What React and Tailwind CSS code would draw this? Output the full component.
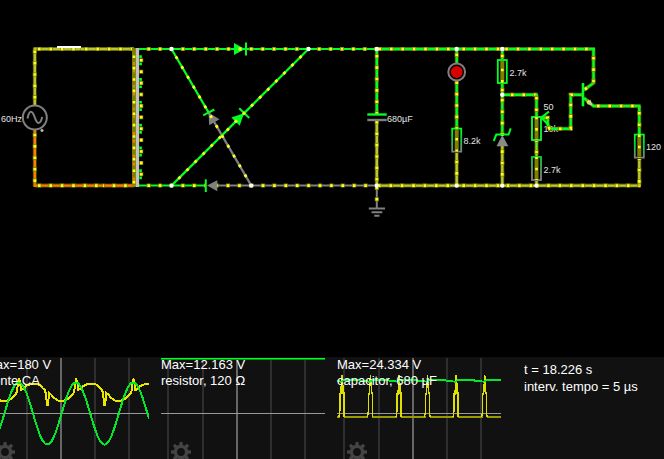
import React from "react";

const GREEN = "#00ff22";
const OLIVE = "#b9c832";
const GRAY = "#808080";
const ORANGE = "#ff7a00";
const STEP = 11.4;

// A wire with evenly spaced current dots; `first` is the distance to the first dot.
function Wire({ d, color, first = 0, wide = false, dots = true }) {
  return (
    <g fill="none">
      {wide && <path d={d} stroke="#808000" strokeWidth="4" opacity="0.6" />}
      <path d={d} stroke={color} strokeWidth={wide ? 2.4 : 2} />
      {dots && (
        <>
          <path d={d} stroke="#808000" strokeWidth="4" strokeDasharray="4 7.4" strokeDashoffset={(2 - first + STEP) % STEP} />
          <path d={d} stroke="#ffff20" strokeWidth="2.6" strokeDasharray="2.6 8.8" strokeDashoffset={(1.3 - first + STEP) % STEP} />
        </>
      )}
    </g>
  );
}

function Resistor({ x, y, fill, first, h = 23 }) {
  return (
    <g>
      <rect x={x - 4.5} y={y} width="9" height={h} fill="none" stroke={fill} strokeWidth="1.8" />
      <path d={`M${x} ${y + 1}V${y + h - 1}`} stroke="#808000" strokeWidth="4" />
      <path
        d={`M${x} ${y}V${y + h}`}
        stroke="#ffff20"
        strokeWidth="2.6"
        strokeDasharray="2.6 8.8"
        strokeDashoffset={(1.3 - first + STEP) % STEP}
      />
    </g>
  );
}

const wires = [
  { d: "M34.8 49H80.5", color: OLIVE, first: 4.5, wide: true },
  { d: "M80.5 49H134", color: OLIVE, first: 5.8, wide: true },
  { d: "M34.8 47.5V106", color: OLIVE, first: 4.2, wide: true },
  { d: "M34.8 129V187", color: ORANGE, first: 6, wide: true },
  { d: "M34.8 185.6H103", color: ORANGE, first: 4.5, wide: true },
  { d: "M103 185.6H134", color: ORANGE, first: 11, wide: true },
  { d: "M139 49H308.5", color: GREEN, first: 9.7 },
  { d: "M308.5 49H376.8", color: GREEN, first: 10.7 },
  { d: "M376.8 49H456.7", color: GREEN, first: 3.1, wide: true },
  { d: "M456.7 49H502.3", color: GREEN, first: 7, wide: true },
  { d: "M502.3 49H595", color: GREEN, first: 4.3, wide: true },
  { d: "M139 185.6H206", color: GREEN, first: 9.7 },
  { d: "M215 185.6H251.3", color: GRAY, first: 1.6 },
  { d: "M251.3 185.6H376.8", color: GRAY, first: 0.3 },
  { d: "M376.8 185.6H456.7", color: OLIVE, first: 2.5, wide: true },
  { d: "M456.7 185.6H502.3", color: OLIVE, first: 7, wide: true },
  { d: "M502.3 185.6H536.5", color: OLIVE, first: 5.7, wide: true },
  { d: "M536.5 185.6H640.5", color: OLIVE, first: 0.6, wide: true },
  { d: "M376.8 49V114", color: GREEN, first: 7.2, wide: true },
  { d: "M376.8 120V185.6", color: OLIVE, first: 2.3, wide: true },
  { d: "M376.8 185.6V208", color: GRAY, first: 2.3 },
  { d: "M456.7 49V63", color: GREEN, first: 5.9, wide: true },
  { d: "M456.7 81V128", color: GREEN, first: 1.7, wide: true },
  { d: "M456.7 153V185.6", color: OLIVE, first: 9, wide: true },
  { d: "M502.3 49V59", color: GREEN, first: 7, wide: true },
  { d: "M502.3 84V94.7", color: GREEN, first: 6, wide: true },
  { d: "M502.3 94.7V135", color: GREEN, first: 5.6, wide: true },
  { d: "M502.3 146V185.6", color: OLIVE, first: 5.6, wide: true },
  { d: "M502.3 94.7H538", color: GREEN, first: 10, wide: true },
  { d: "M536.5 94.7V117", color: GREEN, first: 3.6, wide: true },
  { d: "M536.5 141V157", color: "#70e822", first: 11, wide: true },
  { d: "M536.5 181V185.6", color: OLIVE, dots: false, wide: true },
  { d: "M541 117.7H547.7V124L549.5 128.7H570.7V94.7H583", color: GREEN, first: 6, wide: true },
  { d: "M593.5 49V83L584 90", color: GREEN, first: 9.2, wide: true },
  { d: "M584 98L593.5 106H640.5", color: GREEN, first: 17.2, wide: true },
  { d: "M639.3 106V134", color: GREEN, first: 7.3, wide: true },
  { d: "M639.3 159V185.6", color: OLIVE, first: 11, wide: true },
];

const nodes = [
  [171.5, 49], [308.5, 49], [376.8, 49], [456.7, 49], [502.3, 49], [502.3, 94.7],
  [171.5, 185.6], [251.3, 185.6], [376.8, 185.6], [456.7, 185.6], [502.3, 185.6], [536.5, 185.6],
];

const labels = [
  [1, 122, "60Hz"], [387, 122, "680µF"], [463.5, 144, "8.2k"], [509.5, 76, "2.7k"],
  [543.5, 110, "50"], [543.5, 132, "10k"], [543.5, 173, "2.7k"], [646, 150, "120"],
];

function Circuit() {
  return (
    <svg viewBox="0 0 664 357" className="block h-auto w-full" role="img" aria-label="Circuit">
      <defs>
        <linearGradient id="fade" x1="0" y1="0" x2="0" y2="1">
          <stop offset="0" stopColor={GREEN} />
          <stop offset="0.4" stopColor="#00dd33" />
          <stop offset="1" stopColor={GRAY} />
        </linearGradient>
        <linearGradient id="fadeLow" x1="0" y1="0" x2="0" y2="1">
          <stop offset="0" stopColor="#10d030" />
          <stop offset="0.9" stopColor={GRAY} />
        </linearGradient>
      </defs>

      <g className="fill-[#e4e4e4] font-['Liberation_Sans',Arial,sans-serif] text-[9px]">
        {labels.map(([x, y, t]) => (
          <text key={`${x}-${y}`} x={x} y={y}>{t}</text>
        ))}
      </g>

      {wires.map((w) => <Wire key={w.d} {...w} />)}

      {/* switch */}
      <path d="M57 47H81" stroke="#fff" strokeWidth="2" />

      {/* AC source */}
      <g fill="none" stroke={GRAY} strokeWidth="2">
        <circle cx="34.8" cy="117.5" r="12" />
        <path d="M27.5 118.5C28.5 113.5 29.5 111.8 31 111.8C34.5 111.8 35 123 38.5 123C40 123 41.2 121.3 42.2 117" />
      </g>
      <path d="M42 129V132M40.5 130.5H43.5" stroke="#c0c0c0" strokeWidth="1.4" />

      {/* transformer */}
      <path d="M134 48V187" stroke="#808000" strokeWidth="4" />
      <path d="M134 62V130" stroke="#c09018" strokeWidth="2" strokeDasharray="3 4.6 3 12.2" />
      <path d="M134 132V186" stroke={ORANGE} strokeWidth="2" strokeDasharray="3 4.6 3 12.2" />
      <path d="M134 49V186" stroke="#ffff20" strokeWidth="2.6" strokeDasharray="2.6 8.8" strokeDashoffset={1.3 - 7.7 + STEP} />
      <path d="M137.5 48V187" stroke="#c0c0c0" strokeWidth="3.2" />
      <path d="M140.6 55.3V180" stroke={GREEN} strokeWidth="2.6" strokeDasharray="2.7 4.6 2.7 12.8" />
      <path d="M141.2 58.3V177" stroke="#808000" strokeWidth="4" strokeDasharray="4 7.4" />
      <path d="M141.2 59V177" stroke="#ffff20" strokeWidth="2.6" strokeDasharray="2.6 8.8" />

      {/* bridge rectifier */}
      <path d="M171.5 49L208.7 112.6" stroke={GREEN} strokeWidth="2.2" />
      <path d="M208.7 112.6L251.3 185.6" stroke={GRAY} strokeWidth="2.2" />
      <path d="M208.5 112.5L209.2 125.3L219.5 119.2Z" fill={GRAY} />
      <path d="M203.2 115.3L214.4 109.5" stroke={GREEN} strokeWidth="2" />
      <path d="M171.5 185.6L308.5 49" stroke={GREEN} strokeWidth="2.2" />
      <path d="M244 113.2L231.3 117.5L239.7 125.8Z" fill={GREEN} />
      <path d="M239.2 108.3L249.3 118" stroke={GREEN} strokeWidth="2" />
      <g fill="none" stroke="#ffff20" strokeWidth="2.8" strokeDasharray="2.8 8.6">
        <path d="M171.5 49L251.3 185.6" strokeDashoffset={1.4 - 10 + STEP} />
        <path d="M171.5 185.6L308.5 49" strokeDashoffset={1.4 - 11.2 + STEP} />
      </g>
      <path d="M234 43V55L245 49Z" fill={GREEN} />
      <path d="M246 42.5V55.5" stroke={GREEN} strokeWidth="2" />
      <rect x="238.5" y="47.5" width="3" height="3" fill="#ffff20" />
      <path d="M217.3 180.3V191.3L207 185.6Z" fill={GRAY} />
      <path d="M205.8 179.3V192" stroke={GREEN} strokeWidth="2" />

      {/* capacitor and ground */}
      <path d="M367.3 114.5H386.7" stroke={GREEN} strokeWidth="2.4" />
      <path d="M367.3 120H386.7" stroke={GRAY} strokeWidth="2.4" />
      <path d="M368.8 208.5H385M371.5 212.3H382.3M374.3 215.8H379.5" stroke={GRAY} strokeWidth="2" />

      {/* LED */}
      <circle cx="456.7" cy="72" r="8.4" fill="none" stroke={GRAY} strokeWidth="2" />
      <circle cx="456.7" cy="72" r="6" fill="#d60000" />

      <Resistor x={456.7} y={128.6} fill="url(#fade)" first={10.7} />
      <Resistor x={502.3} y={60} fill={GREEN} first={10} />
      <Resistor x={536.5} y={117} fill="#10ff30" first={1} />
      <Resistor x={536.5} y={157} fill="url(#fadeLow)" first={0.6} />
      <Resistor x={639.3} y={134.6} fill="url(#fade)" first={1} />

      {/* potentiometer wiper */}
      <path d="M549 111.5L541.5 117.7L548.5 125" fill="none" stroke={GREEN} strokeWidth="2.2" />

      {/* zener */}
      <path d="M502.3 135L496.5 146.2H508.3Z" fill="#8a8a8a" />
      <rect x="500.8" y="133" width="3" height="3" fill="#ffff20" />
      <path d="M493.7 141L496.3 134.6H508.5L510.7 128.3" fill="none" stroke={GREEN} strokeWidth="2" />

      {/* transistor */}
      <path d="M583 83V106.3" stroke={GREEN} strokeWidth="2.6" />
      <path d="M592.5 105.5L586.8 104L590.3 99.6Z" fill="#d0d0a0" />

      {nodes.map(([x, y]) => <circle key={`${x}-${y}`} cx={x} cy={y} r="2.2" fill="#fff" />)}
    </svg>
  );
}

// Vertical divisions shared by all scopes; the middle one is brighter.
function Scope({ title, name, children }) {
  return (
    <section className="relative">
      <svg viewBox="0 0 164 102" className="block h-auto w-full" aria-hidden="true" shapeRendering="crispEdges">
        {[6, 41, 109, 143].map((x) => <rect key={x} x={x} y="1" width="2" height="101" fill="#2e2e2e" />)}
        <rect x="75" y="1" width="2" height="101" fill="#666" />
        <rect x="0" y="56" width="164" height="1" fill="#999" />
        {children}
      </svg>
      <p className="absolute inset-x-0 top-0 whitespace-pre-line text-[13px] leading-4">
        {title}{"\n"}{name}
      </p>
      <button type="button" aria-label="Settings" className="absolute left-2.5 top-[85px] size-5 text-[#444]">
        <svg viewBox="0 0 20 20" className="size-5" fill="none" stroke="currentColor">
          <circle cx="10" cy="10" r="5.6" strokeWidth="3.4" />
          {[0, 45, 90, 135, 180, 225, 270, 315].map((a) => (
            <path key={a} d="M10 1.4V4" strokeWidth="3.4" strokeLinecap="round" transform={`rotate(${a} 10 10)`} />
          ))}
        </svg>
      </button>
    </section>
  );
}

const SINE = Array.from({ length: 165 }, (_, x) => {
  const y = 56.5 - 31 * Math.cos((2 * Math.PI * (x - 33.7)) / 57.2);
  return `${x},${y.toFixed(1)}`;
}).join(" ");

const CURRENT_CYCLE = [
  [-8, 42], [-4, 38], [-2, 35], [-1, 26], [0, 22.5], [1, 24], [2, 33], [4, 32], [7, 29], [11, 27.3],
  [15, 26.5], [19, 27], [22, 29], [24, 31.5], [26, 33], [27, 38], [28, 48], [29, 48], [30, 36],
  [32, 37.5], [35, 41], [39, 43.5], [45, 43.5],
];
const CURRENT = [-23.2, 34, 91.2, 148.4]
  .flatMap((o) => CURRENT_CYCLE.map(([x, y]) => [o + x, y]))
  .filter(([x]) => x <= 164)
  .concat([[164, 26.5]])
  .map((p) => p.join(","))
  .join(" ");

const PULSES = [4.8, 33.4, 62, 90.5, 119, 147.7];

export default function App() {
  return (
    <div className="flex min-h-screen flex-col overflow-hidden bg-black font-['Liberation_Sans',Arial,sans-serif] text-white">
      <main>
        <Circuit />
      </main>
      <footer className="-ml-[15px] grid flex-1 grid-cols-[164fr_164fr_164fr_151fr] gap-3 overflow-hidden bg-[#111]">
        <Scope title="Max=180 V" name="Fonte CA">
          <polyline points={CURRENT} fill="none" stroke="#e8e800" strokeWidth="2" />
          <polyline points={SINE} fill="none" stroke="#00e828" strokeWidth="2" />
        </Scope>
        <Scope title="Max=12.163 V" name="resistor, 120 Ω">
          <rect x="0" y="1" width="164" height="1" fill="#00ff22" />
          <rect x="0" y="2" width="164" height="1" fill="#009914" />
        </Scope>
        <Scope title="Max=24.334 V" name="capacitor, 680 µF">
          <rect x="0" y="59" width="164" height="2" fill="#999900" />
          {PULSES.map((x) => (
            <g key={x}>
              <rect x={x - 2} y="58" width="4" height="3" fill="#111" />
              <path
                d={`M${x - 3} 60L${x - 2} 54V37H${x - 1}L${x} 18L${x + 1} 28V36H${x + 2}V59H${x + 3}`}
                fill="none"
                stroke="#e0e000"
                strokeWidth="1.4"
              />
            </g>
          ))}
          <path
            d={"M0 24H2" + PULSES.map((x) => `L${x - 1} 25L${x + 2} 23H${x + 18}L${x + 19} 24H${Math.min(x + 25, 164)}`).join("")}
            fill="none"
            stroke="#00e828"
            strokeWidth="1.6"
          />
        </Scope>
        <p className="whitespace-pre-line pl-[11px] pt-1 text-[13px] leading-[17px]">
          {"t = 18.226 s\ninterv. tempo = 5 µs"}
        </p>
      </footer>
    </div>
  );
}
